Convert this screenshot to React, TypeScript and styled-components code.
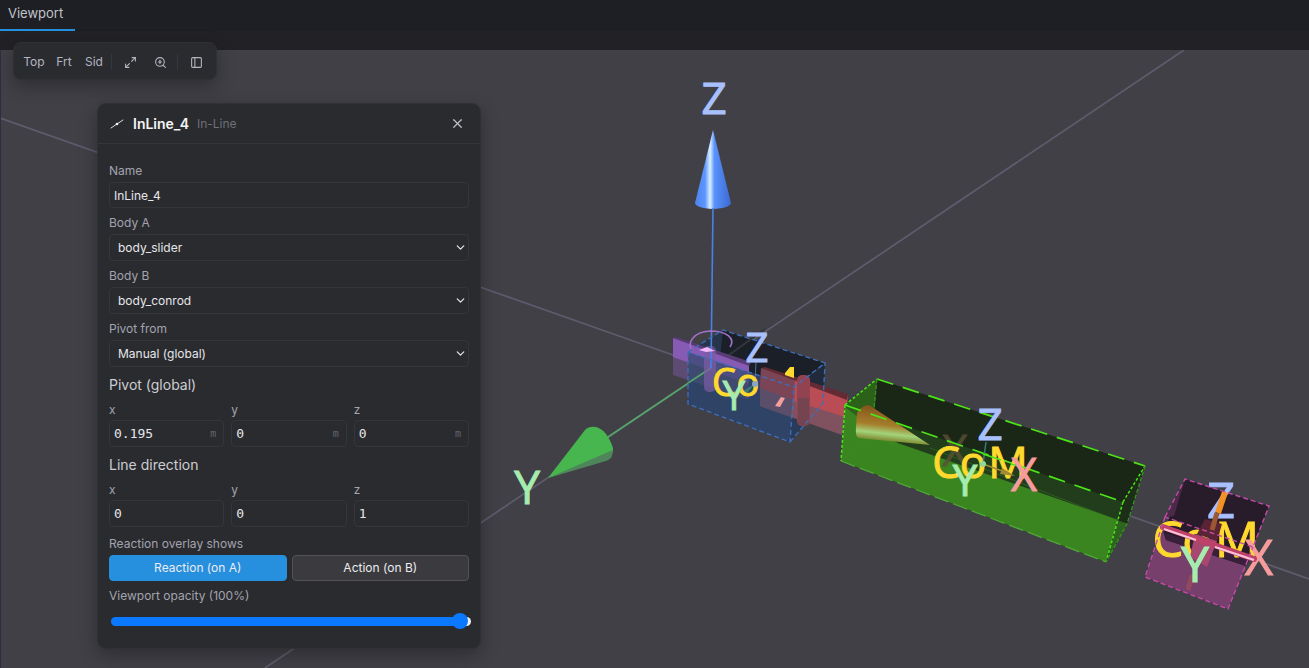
import React from "react";
import styled, { createGlobalStyle, css } from "styled-components";
import { Maximize2, ZoomIn, PanelLeft, X, ChevronDown } from "lucide-react";

const GlobalStyle = createGlobalStyle`
  *, *::before, *::after { box-sizing: border-box; }
  body {
    margin: 0;
    background: #414047;
    color: #e2e2e6;
    font: 13px/16px Inter, "Liberation Sans", sans-serif;
  }
  button, input, select { font: inherit; color: inherit; }
`;

const Page = styled.div`
  display: flex;
  flex-direction: column;
  min-height: 100vh;
`;

const TabBar = styled.nav`
  display: flex;
  background: #1d1f24;
`;

const Tab = styled.button`
  height: 31px;
  padding: 0 12px 4px 8px;
  border: 0;
  border-bottom: 2px solid #2490e0;
  background: none;
  color: #c3c4ca;
`;

const Stage = styled.main`
  position: relative;
  flex: 1;
  display: flex;
  flex-direction: column;
  align-items: flex-start;
  gap: 23px;
  padding: 11px 13px 16px;
  background: #222125;
`;

const Scene = styled.svg`
  position: absolute;
  inset: 19px 0 0;
  width: 100%;
  height: calc(100% - 19px);
  background: #414047;
`;

const floating = css`
  position: relative;
  background: #2a2b2f;
  border: 1px solid #303135;
  box-shadow: 0 6px 18px rgba(0, 0, 0, 0.3);
`;

const Toolbar = styled.div`
  ${floating}
  display: flex;
  align-items: center;
  padding: 5px 5px 3px;
  border-radius: 8px;
`;

const ToolButton = styled.button`
  display: grid;
  place-items: center;
  width: 30px;
  height: 28px;
  padding: 0;
  border: 0;
  background: none;
  color: #b4b5c0;
  font-size: 12px;
`;

const Divider = styled.span`
  width: 1px;
  height: 16px;
  margin: 0 3px 0 2px;
  background: #36373c;
`;

const Panel = styled.section`
  ${floating}
  width: 384px;
  margin-left: 84px;
  border-radius: 9px;
`;

const PanelHeader = styled.header`
  display: flex;
  align-items: center;
  gap: 8px;
  height: 40px;
  padding: 0 11px;
  border-bottom: 1px solid #35363a;
`;

const Title = styled.h2`
  margin: 0;
  font-size: 14px;
  font-weight: 600;
  color: #f4f4f6;
`;

const Kind = styled.span`
  color: #6e6f78;
  font-size: 12px;
`;

const CloseButton = styled.button`
  display: grid;
  place-items: center;
  width: 24px;
  height: 24px;
  margin-left: auto;
  padding: 0;
  border: 0;
  background: none;
  color: #bcbdc4;
`;

const Form = styled.form`
  display: flex;
  flex-direction: column;
  gap: 7px;
  padding: 19px 11px;
`;

const Field = styled.div<{ $spaced?: boolean }>`
  display: flex;
  flex-direction: column;
  gap: 3px;
  min-width: 0;
  margin-top: ${(p) => (p.$spaced ? 2 : 0)}px;
`;

const Label = styled.label<{ $small?: boolean }>`
  color: #a2a3ae;
  font-size: 12px;
  line-height: ${(p) => (p.$small ? 15 : 16)}px;
`;

const box = css`
  width: 100%;
  border: 1px solid #35363a;
  border-radius: 4px;
  background: #2a2b2f;
  color: #e6e6ea;
`;

const TextInput = styled.input`
  ${box}
  height: 26px;
  padding: 0 4px;
  font-size: 12px;
`;

const NumberBox = styled.div`
  ${box}
  display: flex;
  align-items: center;
  height: 27px;
  padding: 0 7px 0 4px;
  font-family: "DejaVu Sans Mono", monospace;
`;

const NumberInput = styled.input`
  flex: 1;
  min-width: 0;
  padding: 0;
  border: 0;
  background: none;
`;

const Unit = styled.span`
  color: #64656d;
  font-size: 10px;
`;

const SelectBox = styled.div`
  display: grid;
  align-items: center;
  & > * { grid-area: 1 / 1; }
  svg { justify-self: end; margin-right: 2px; pointer-events: none; }
`;

const Select = styled.select`
  ${box}
  appearance: none;
  height: 27px;
  padding: 0 24px 0 8px;
  font-size: 12px;
`;

const GroupTitle = styled.h3`
  margin: 0;
  color: #cdcdd2;
  font-size: 14px;
  font-weight: 400;
  line-height: 21px;
`;

const Columns = styled.div<{ $count: number; $gap: number }>`
  display: grid;
  grid-template-columns: repeat(${(p) => p.$count}, minmax(0, 1fr));
  gap: ${(p) => p.$gap}px;
`;

const Choice = styled.button<{ $active?: boolean }>`
  height: 26px;
  padding: 0;
  border: 1px solid ${(p) => (p.$active ? "#268fde" : "#515156")};
  border-radius: 4px;
  background: ${(p) => (p.$active ? "#268fde" : "#3b3a3e")};
  color: #ececf0;
  font-size: 12px;
`;

const Slider = styled.input`
  appearance: none;
  width: 100%;
  height: 16px;
  margin: 6px 0 0 2px;
  background: none;
  &::-webkit-slider-runnable-track {
    height: 9px;
    border-radius: 5px;
    background: linear-gradient(to right, #0a78ff 97%, #f0f0f0 97%);
  }
  &::-webkit-slider-thumb {
    appearance: none;
    width: 16px;
    height: 16px;
    margin-top: -4px;
    border-radius: 50%;
    background: #0a78ff;
  }
`;

const Glyph = styled.text`
  font-family: "Open Sans", "Noto Sans", sans-serif;
  text-anchor: middle;
`;

const BLUE = "#a9c0ff";
const GREEN = "#a6ecae";
const PINK = "#f69c9c";
const YELLOW = "#ffd92e";

function Letter({ x, y, size, fill, children, opacity }: {
  x: number; y: number; size: number; fill: string; children: string; opacity?: number;
}) {
  return <Glyph x={x} y={y} fontSize={size} fill={fill} stroke={fill} strokeWidth={1} opacity={opacity}>{children}</Glyph>;
}

function SliderBody() {
  return (
    <g>
      <path d="M723 330 825 363 823 403 790 442 688 404 688 352Z" fill="#26354f" />
      <path d="M723 330 825 363 824 385 815 391 794 387 704 356 717 340Z" fill="#1b1f28" />
      <path d="M688 352 723 330 720 358 700 373Z" fill="#27354c" />
      <path d="M794 387 825 363 823 403 790 442Z" fill="#2a3b5a" />
      <path d="M796 387 825 364 823 388Z" fill="#202a3b" />
      <path d="M711 368 765 329" stroke="#34363e" strokeWidth="2" />
      <path d="M673 338 749 364V400L673 375Z" fill="#5e4b73" />
      <path d="M673 338 749 364V384L673 357Z" fill="#875bb4" />
      <path d="M673 338 676 337 751 362 749 366Z" fill="#593c75" />
      <path d="M688 352 794 387 790 442 688 404Z" fill="#33496f" fillOpacity=".72" />
      <path d="M711 368 688 383" stroke="#55a56b" strokeWidth="1.5" />
      <path d="M761 368 848 396 842 435 760 406Z" fill="#80525f" />
      <path d="M795 380 848 397 845 417 794 401Z" fill="#b94c55" />
      <path d="M761 368 795 379 794 401 760 388Z" fill="#7c4556" />
      <path d="M761 368 765 367 848 394 847 400Z" fill="#632b34" />
      <path d="M760 388 793 400 791 417 760 406Z" fill="#5b4e69" />
      <rect x="704" y="346" width="12" height="46" rx="5" fill="#7a5ca4" opacity=".7" />
      <rect x="797" y="375" width="13" height="51" rx="5" fill="#934252" />
      <path d="M798 398H809V424Q803 427 798 424Z" fill="#744451" />
      <path d="M711 368 713 208" stroke="#4b80e0" strokeWidth="1.6" />
      <path d="M692 350C687 343 693 332 710 331 726 331 736 338 730 347" fill="none" stroke="#a071c9" strokeWidth="1.6" />
      <path d="M699 350 707 347 715 351 706 352Z" fill="#f0b8fa" />
      <path d="M688 352 723 330 825 363 794 387ZM688 352V404L790 442 794 387M790 442 823 403 825 363" fill="none" stroke="#3d6fbc" strokeWidth="1.3" strokeDasharray="5 3" />
      <path d="M756 362 755 384 741 393" fill="none" stroke="#4673a1" />
      <path d="M755 384 741 393 745 395Z" fill="#328269" />
      <Letter x={724} y={396} size={38} fill={YELLOW}>C</Letter>
      <Letter x={748} y={396} size={38} fill={YELLOW}>o</Letter>
      <path d="M785 373 790 367H794V378L785 375Z" fill={YELLOW} />
      <path d="M775 406 781 397 785 398 780 407Z" fill={PINK} />
      <circle cx="755" cy="384" r="3" fill="#8ca5c2" />
      <Letter x={734} y={410} size={40} fill={GREEN}>Y</Letter>
      <Letter x={757} y={362} size={40} fill={BLUE}>Z</Letter>
    </g>
  );
}

function ConrodBody() {
  return (
    <g>
      <path d="M877 379 1145 466 1127 524 1106 562 841 461 845 405Z" fill="#1a2616" />
      <path d="M845 405 1123 502 1118 521 898 443Z" fill="#223d1b" />
      <path d="M845 405 877 379 873 434 841 461Z" fill="#2b6119" />
      <path d="M841 461 845 407 872 428 898 443 1118 520 1106 562Z" fill="#3b8520" />
      <path d="M1123 502 1145 466 1127 524 1106 562Z" fill="#1c2e17" />
      <path d="M1118 521 1127 524 1106 562Z" fill="#2e651e" />
      <path d="M841 461 873 437 898 446M930 448 1127 524" fill="none" stroke="#3f8f27" strokeOpacity=".4" />
      <path d="M856 427 857 413Q862 405 869 405L930 445 859 438Q855 437 856 427Z" fill="url(#coneX)" />
      <Letter x={955} y={466} size={44} fill="#5b5134" opacity={0.8}>X</Letter>
      <path d="M845 405 1123 502M877 379 1145 466" stroke="#4ce417" strokeWidth="1.7" strokeDasharray="17 10" />
      <path d="M841 461 1106 562" stroke="#4ea936" strokeWidth="1.3" strokeDasharray="15 5" />
      <path d="M845 405 877 379M845 405 841 461M1123 502 1145 466M1123 502 1106 562" stroke="#4ce417" strokeWidth="1.5" strokeDasharray="3 2" />
      <path d="M877 379 874 408M1145 466 1127 524 1106 562" fill="none" stroke="#37921f" strokeWidth="1.3" strokeDasharray="4 2" />
      <Letter x={946} y={478} size={44} fill={YELLOW}>C</Letter>
      <Letter x={973} y={478} size={44} fill={YELLOW}>o</Letter>
      <Letter x={1008} y={478} size={44} fill={YELLOW}>M</Letter>
      <path d="M986 442 983 464" stroke="#347b80" strokeWidth="1.5" />
      <path d="M983 464 1005 472" stroke="#a08a32" strokeWidth="1.5" />
      <path d="M1002 468 1015 476 1000 474Z" fill="#a08a32" />
      <path d="M983 454 1001 460M1011 464 1030 469" stroke="#4ce417" strokeWidth="1.7" />
      <circle cx="983" cy="464" r="3" fill="#91d99b" />
      <Letter x={990} y={440} size={44} fill={BLUE}>Z</Letter>
      <Letter x={965} y={496} size={44} fill={GREEN}>Y</Letter>
      <Letter x={1024} y={491} size={45} fill={PINK}>X</Letter>
    </g>
  );
}

function CrankBody() {
  return (
    <g>
      <path d="M1185 479 1269 506 1228 609 1145 577Z" fill="#281c2a" />
      <path d="M1185 479 1174 516 1165 517Z" fill="#4b2a49" />
      <path d="M1145 577 1162 528 1166 540 1246 566 1228 609Z" fill="#763f6c" />
      <path d="M1165 533 1250 560 1246 566 1166 540Z" fill="#38203a" />
      <Letter x={1221} y={518} size={49} fill={BLUE}>Z</Letter>
      <Letter x={1168} y={557} size={49} fill={YELLOW}>C</Letter>
      <Letter x={1197} y={557} size={49} fill={YELLOW}>o</Letter>
      <Letter x={1237} y={557} size={49} fill={YELLOW}>M</Letter>
      <Letter x={1259} y={575} size={49} fill={PINK}>X</Letter>
      <path d="M1205 519 1222 524 1217 541 1197 534Z" fill="#5b2436" />
      <path d="M1195 534 1217 541 1207 567 1190 557Z" fill="#a6486f" />
      <path d="M1225 492 1218 513" stroke="#f49125" strokeWidth="6" />
      <path d="M1217 513 1212 530" stroke="#9b5634" strokeWidth="5" />
      <path d="M1192 575 1188 590" stroke="#91495b" strokeWidth="5" />
      <path d="M1163 527 1254 559" stroke="#bd4168" strokeWidth="6" strokeLinecap="round" />
      <path d="M1164 529 1196 540M1215 547 1254 560" stroke="#ffc2dc" strokeWidth="2" />
      <path d="M1165 517 1185 479 1269 506 1253 547ZM1165 517 1145 577 1228 609 1253 547" fill="none" stroke="#c54aa8" strokeWidth="1.4" strokeDasharray="5 3" />
      <Letter x={1195} y={582} size={50} fill={GREEN}>Y</Letter>
    </g>
  );
}

function SceneView() {
  return (
    <Scene viewBox="0 50 1309 618" preserveAspectRatio="xMidYMid slice" role="img" aria-label="3D viewport">
      <defs>
        <linearGradient id="coneZ">
          <stop offset="0" stopColor="#4c83f0" />
          <stop offset=".28" stopColor="#5e96ff" />
          <stop offset=".42" stopColor="#d9f0ff" />
          <stop offset=".54" stopColor="#5a92fb" />
          <stop offset="1" stopColor="#3b69d2" />
        </linearGradient>
        <linearGradient id="coneX" x1=".2" y1="0" x2="0" y2="1">
          <stop offset="0" stopColor="#82521c" />
          <stop offset=".45" stopColor="#a67d2b" />
          <stop offset=".65" stopColor="#a3d47a" />
          <stop offset=".8" stopColor="#85923a" />
          <stop offset="1" stopColor="#6f8c35" />
        </linearGradient>
      </defs>
      <path d="M0 118 1309 579M1184 50 265 668" stroke="#5e5c6c" strokeWidth="1.7" />
      <path d="M711 368 608 437" stroke="#55a56b" strokeWidth="1.7" />
      <path d="M548 478 585 430Q589 426 596 427 607 430 613 448V452L608 459Z" fill="#47b64e" />
      <path d="M548 478 613 450 612 456Q611 459 606 461Z" fill="#4e855a" />
      <path d="M713 130 695 203Q696 208 713 209 730 208 731 203Z" fill="url(#coneZ)" />
      <SliderBody />
      <ConrodBody />
      <CrankBody />
      <Letter x={714} y={114} size={44} fill={BLUE}>Z</Letter>
      <Letter x={527} y={504} size={46} fill={GREEN}>Y</Letter>
      <path d="M.5 50V668" stroke="#302d42" />
    </Scene>
  );
}

function SelectField({ id, label, value }: { id: string; label: string; value: string }) {
  return (
    <Field>
      <Label htmlFor={id}>{label}</Label>
      <SelectBox>
        <Select id={id} defaultValue={value}><option>{value}</option></Select>
        <ChevronDown size={13} strokeWidth={2.4} />
      </SelectBox>
    </Field>
  );
}

function VectorField({ id, title, values, unit }: { id: string; title: string; values: string[]; unit?: string }) {
  return (
    <>
      <GroupTitle>{title}</GroupTitle>
      <Columns $count={3} $gap={7}>
        {["x", "y", "z"].map((axis, i) => (
          <Field key={axis}>
            <Label $small htmlFor={id + axis}>{axis}</Label>
            <NumberBox>
              <NumberInput id={id + axis} defaultValue={values[i]} />
              {unit && <Unit>{unit}</Unit>}
            </NumberBox>
          </Field>
        ))}
      </Columns>
    </>
  );
}

export default function App() {
  return (
    <Page>
      <GlobalStyle />
      <TabBar><Tab>Viewport</Tab></TabBar>
      <Stage>
        <SceneView />
        <Toolbar>
          <ToolButton>Top</ToolButton>
          <ToolButton>Frt</ToolButton>
          <ToolButton>Sid</ToolButton>
          <Divider />
          <ToolButton aria-label="Fit view"><Maximize2 size={13} /></ToolButton>
          <ToolButton aria-label="Zoom in"><ZoomIn size={13} /></ToolButton>
          <Divider />
          <ToolButton aria-label="Toggle side panel"><PanelLeft size={13} /></ToolButton>
        </Toolbar>
        <Panel>
          <PanelHeader>
            <svg width="16" height="16" viewBox="0 0 16 16" aria-hidden="true">
              <path d="M2 12 14 4" stroke="#dcdce2" strokeWidth="1" strokeLinecap="round" />
              <circle cx="8" cy="8" r="1.3" fill="#f4f4f6" />
            </svg>
            <Title>InLine_4</Title>
            <Kind>In-Line</Kind>
            <CloseButton aria-label="Close"><X size={15} /></CloseButton>
          </PanelHeader>
          <Form onSubmit={(e) => e.preventDefault()}>
            <Field>
              <Label htmlFor="name">Name</Label>
              <TextInput id="name" defaultValue="InLine_4" />
            </Field>
            <SelectField id="bodyA" label="Body A" value="body_slider" />
            <SelectField id="bodyB" label="Body B" value="body_conrod" />
            <SelectField id="pivotFrom" label="Pivot from" value="Manual (global)" />
            <VectorField id="pivot-" title="Pivot (global)" values={["0.195", "0", "0"]} unit="m" />
            <VectorField id="direction-" title="Line direction" values={["0", "0", "1"]} />
            <Field $spaced role="group" aria-labelledby="overlay">
              <Label as="span" id="overlay">Reaction overlay shows</Label>
              <Columns $count={2} $gap={5}>
                <Choice type="button" $active aria-pressed="true">Reaction (on A)</Choice>
                <Choice type="button" aria-pressed="false">Action (on B)</Choice>
              </Columns>
            </Field>
            <Field>
              <Label htmlFor="opacity">Viewport opacity (100%)</Label>
              <Slider id="opacity" type="range" min={0} max={100} defaultValue={99} />
            </Field>
          </Form>
        </Panel>
      </Stage>
    </Page>
  );
}
